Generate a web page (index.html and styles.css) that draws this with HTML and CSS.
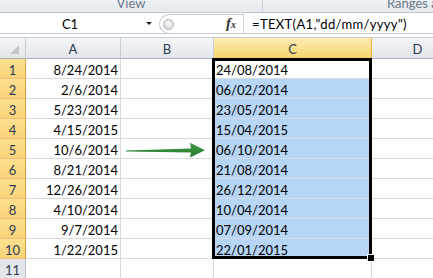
FILE: index.html
```html
<!DOCTYPE html>
<html>
<head>
<meta charset="utf-8">
<link rel="stylesheet" href="styles.css">
</head>
<body>
<div class="ribbon">
  <div class="grp grp-view"><span class="grp-label">View</span></div>
  <div class="grp grp-ranges"><span class="grp-label">Ranges and Names</span></div>
</div>
<div class="fbar">
  <div class="namebox"><span class="name">C1</span><span class="dd"></span></div>
  <div class="mid"><span class="knob"></span><span class="fx">f<span class="fx-x">x</span></span></div>
  <div class="formula">=TEXT(A1,"dd/mm/yyyy")</div>
</div>
<div class="gap"></div>
<div class="sheet">
  <div class="c hd corner"><span class="tri"></span></div>
  <div class="c hd">A</div>
  <div class="c hd">B</div>
  <div class="c hd on">C</div>
  <div class="c hd">D</div>

  <div class="c rh on">1</div><div class="c num">8/24/2014</div><div class="c"></div><div class="c txt">24/08/2014</div><div class="c"></div>
  <div class="c rh on">2</div><div class="c num">2/6/2014</div><div class="c"></div><div class="c txt blue">06/02/2014</div><div class="c"></div>
  <div class="c rh on">3</div><div class="c num">5/23/2014</div><div class="c"></div><div class="c txt blue">23/05/2014</div><div class="c"></div>
  <div class="c rh on">4</div><div class="c num">4/15/2015</div><div class="c"></div><div class="c txt blue">15/04/2015</div><div class="c"></div>
  <div class="c rh on">5</div><div class="c num">10/6/2014</div>
  <div class="c arrow-cell"><svg class="arrow" width="92" height="19" viewBox="0 0 92 19"><defs><linearGradient id="ag" x1="0" y1="0" x2="0" y2="1"><stop offset="0" stop-color="#3f9a44"/><stop offset="1" stop-color="#277a2e"/></linearGradient></defs><polygon points="5,11.6 70,9.4 69,3.8 84,11.2 69,18.6 70,13.6 5,12.4" fill="url(#ag)"/></svg></div>
  <div class="c txt blue">06/10/2014</div><div class="c"></div>
  <div class="c rh on">6</div><div class="c num">8/21/2014</div><div class="c"></div><div class="c txt blue">21/08/2014</div><div class="c"></div>
  <div class="c rh on">7</div><div class="c num">12/26/2014</div><div class="c"></div><div class="c txt blue">26/12/2014</div><div class="c"></div>
  <div class="c rh on">8</div><div class="c num">4/10/2014</div><div class="c"></div><div class="c txt blue">10/04/2014</div><div class="c"></div>
  <div class="c rh on">9</div><div class="c num">9/7/2014</div><div class="c"></div><div class="c txt blue">07/09/2014</div><div class="c"></div>
  <div class="c rh on">10</div><div class="c num">1/22/2015</div><div class="c"></div><div class="c txt blue">22/01/2015</div><div class="c"></div>
  <div class="c rh">11</div><div class="c"></div><div class="c"></div><div class="c"></div><div class="c"></div>

  <div class="selection"><span class="handle"></span></div>
</div>
</body>
</html>
```
FILE: styles.css
```css
* { box-sizing: border-box; }
html, body {
  margin: 0;
  width: 433px;
  height: 278px;
  overflow: hidden;
  background: #fff;
  font-family: Lato, "Liberation Sans", sans-serif;
}
.ribbon {
  height: 12px;
  display: flex;
  overflow: hidden;
  background: linear-gradient(#edf0f4, #e5e9ee);
  color: #6b7787;
  font-size: 13px;
  line-height: 16px;
}
.grp { display: flex; flex-shrink: 0; white-space: nowrap; }
.grp-view {
  width: 263px;
  justify-content: center;
  border-right: 1px solid #c9ced5;
}
.grp-ranges { padding-left: 124px; }
.grp-label { margin-top: -5px; }

.fbar {
  display: flex;
  height: 22px;
  border-top: 1px solid #c4cad2;
  border-bottom: 1px solid #c4cad2;
  background: #fff;
  font-size: 13px;
  line-height: 16px;
  color: #000;
}
.namebox {
  width: 159px;
  display: flex;
  align-items: flex-end;
  padding-bottom: 1px;
}
.name { width: 140px; text-align: center; }
.dd {
  width: 0;
  height: 0;
  margin-left: 6px;
  align-self: center;
  margin-bottom: -2px;
  border-left: 3px solid transparent;
  border-right: 3px solid transparent;
  border-top: 3px solid #222;
}
.mid {
  width: 84px;
  height: 20px;
  margin-top: 1px;
  display: flex;
  align-items: center;
  border: 1px solid #c6cbd2;
  border-right: none;
  border-radius: 10px 0 0 10px;
}
.knob {
  width: 11px;
  height: 11px;
  margin-left: 3px;
  border-radius: 50%;
  border: 1px solid #aab0b7;
  background: radial-gradient(circle at 50% 35%, #f6f7f8, #d2d5d9);
}
.fx {
  margin-left: auto;
  width: 24px;
  text-align: center;
  font-family: "Liberation Serif", serif;
  font-style: italic;
  font-weight: bold;
  font-size: 15px;
  color: #333;
}
.fx-x { font-size: 10px; }
.formula {
  flex: 1;
  display: flex;
  align-items: flex-end;
  padding: 0 0 1px 8px;
  border-left: 1px solid #cdd2d8;
  white-space: nowrap;
  letter-spacing: 0.35px;
}
.gap {
  height: 4px;
  border-bottom: 1px solid #c5cad1;
}

.sheet {
  position: relative;
  display: grid;
  grid-template-columns: 26px 95px 93px 158px 92px;
  grid-template-rows: 21px repeat(11, 20px);
  font-size: 13px;
  line-height: 16px;
  color: #000;
}
.c {
  display: flex;
  align-items: flex-end;
  white-space: nowrap;
  border-right: 1px solid #d9d9d9;
  border-bottom: 1px solid #d9d9d9;
}
.num { justify-content: flex-end; padding-right: 2px; }
.txt { padding-left: 2px; }
.blue { background: #b7d6f7; border-bottom-color: #d3dbe4; border-right-color: #b7d6f7; }

.hd {
  justify-content: center;
  padding-bottom: 1px;
  color: #2b3b50;
  background: linear-gradient(#f5f6f8, #e2e5ea);
  border-right-color: #c7ccd2;
  border-bottom-color: #abb1b9;
}
.hd.on {
  background: linear-gradient(#feecb4, #f8d46e);
  border-right-color: #efb04a;
  border-bottom-color: #e8a63a;
}
.corner { justify-content: flex-end; padding: 0 6px 4px 0; }
.tri {
  width: 9px;
  height: 9px;
  background: #c3c8cf;
  clip-path: polygon(100% 0, 100% 100%, 0 100%);
}
.rh {
  justify-content: center;
  color: #2b3b50;
  background: #e3e7ed;
  border-right-color: #b9bfc7;
  border-bottom-color: #c9ced5;
}
.rh.on {
  background: linear-gradient(#fde08e, #fad27a);
  border-right-color: #e29f39;
  border-bottom-color: #eec078;
}
.arrow-cell { align-items: stretch; }
.arrow { display: block; }

.selection {
  position: absolute;
  left: 212px;
  top: 20px;
  width: 160px;
  height: 201px;
  border: 3px solid #000;
  pointer-events: none;
}
.handle {
  position: absolute;
  right: -5px;
  bottom: -5px;
  width: 6px;
  height: 6px;
  background: #000;
  box-shadow: 0 0 0 1px #fff;
}
```
